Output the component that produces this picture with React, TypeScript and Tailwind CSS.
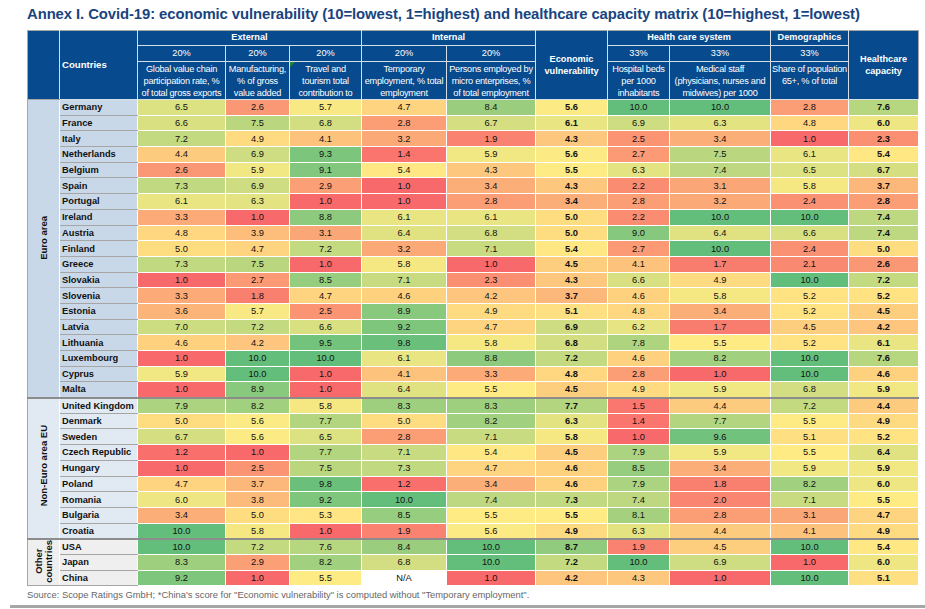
import React from "react";

type Row = [string, ...(number | null)[]];

const euro: Row[] = [
  ["Germany", 6.5, 2.6, 5.7, 4.7, 8.4, 5.6, 10.0, 10.0, 2.8, 7.6],
  ["France", 6.6, 7.5, 6.8, 2.8, 6.7, 6.1, 6.9, 6.3, 4.8, 6.0],
  ["Italy", 7.2, 4.9, 4.1, 3.2, 1.9, 4.3, 2.5, 3.4, 1.0, 2.3],
  ["Netherlands", 4.4, 6.9, 9.3, 1.4, 5.9, 5.6, 2.7, 7.5, 6.1, 5.4],
  ["Belgium", 2.6, 5.9, 9.1, 5.4, 4.3, 5.5, 6.3, 7.4, 6.5, 6.7],
  ["Spain", 7.3, 6.9, 2.9, 1.0, 3.4, 4.3, 2.2, 3.1, 5.8, 3.7],
  ["Portugal", 6.1, 6.3, 1.0, 1.0, 2.8, 3.4, 2.8, 3.2, 2.4, 2.8],
  ["Ireland", 3.3, 1.0, 8.8, 6.1, 6.1, 5.0, 2.2, 10.0, 10.0, 7.4],
  ["Austria", 4.8, 3.9, 3.1, 6.4, 6.8, 5.0, 9.0, 6.4, 6.6, 7.4],
  ["Finland", 5.0, 4.7, 7.2, 3.2, 7.1, 5.4, 2.7, 10.0, 2.4, 5.0],
  ["Greece", 7.3, 7.5, 1.0, 5.8, 1.0, 4.5, 4.1, 1.7, 2.1, 2.6],
  ["Slovakia", 1.0, 2.7, 8.5, 7.1, 2.3, 4.3, 6.6, 4.9, 10.0, 7.2],
  ["Slovenia", 3.3, 1.8, 4.7, 4.6, 4.2, 3.7, 4.6, 5.8, 5.2, 5.2],
  ["Estonia", 3.6, 5.7, 2.5, 8.9, 4.9, 5.1, 4.8, 3.4, 5.2, 4.5],
  ["Latvia", 7.0, 7.2, 6.6, 9.2, 4.7, 6.9, 6.2, 1.7, 4.5, 4.2],
  ["Lithuania", 4.6, 4.2, 9.5, 9.8, 5.8, 6.8, 7.8, 5.5, 5.2, 6.1],
  ["Luxembourg", 1.0, 10.0, 10.0, 6.1, 8.8, 7.2, 4.6, 8.2, 10.0, 7.6],
  ["Cyprus", 5.9, 10.0, 1.0, 4.1, 3.3, 4.8, 2.8, 1.0, 10.0, 4.6],
  ["Malta", 1.0, 8.9, 1.0, 6.4, 5.5, 4.5, 4.9, 5.9, 6.8, 5.9],
];

const nonEuro: Row[] = [
  ["United Kingdom", 7.9, 8.2, 5.8, 8.3, 8.3, 7.7, 1.5, 4.4, 7.2, 4.4],
  ["Denmark", 5.0, 5.6, 7.7, 5.0, 8.2, 6.3, 1.4, 7.7, 5.5, 4.9],
  ["Sweden", 6.7, 5.6, 6.5, 2.8, 7.1, 5.8, 1.0, 9.6, 5.1, 5.2],
  ["Czech Republic", 1.2, 1.0, 7.7, 7.1, 5.4, 4.5, 7.9, 5.9, 5.5, 6.4],
  ["Hungary", 1.0, 2.5, 7.5, 7.3, 4.7, 4.6, 8.5, 3.4, 5.9, 5.9],
  ["Poland", 4.7, 3.7, 9.8, 1.2, 3.4, 4.6, 7.9, 1.8, 8.2, 6.0],
  ["Romania", 6.0, 3.8, 9.2, 10.0, 7.4, 7.3, 7.4, 2.0, 7.1, 5.5],
  ["Bulgaria", 3.4, 5.0, 5.3, 8.5, 5.5, 5.5, 8.1, 2.8, 3.1, 4.7],
  ["Croatia", 10.0, 5.8, 1.0, 1.9, 5.6, 4.9, 6.3, 4.4, 4.1, 4.9],
];

const other: Row[] = [
  ["USA", 10.0, 7.2, 7.6, 8.4, 10.0, 8.7, 1.9, 4.5, 10.0, 5.4],
  ["Japan", 8.3, 2.9, 8.2, 6.8, 10.0, 7.2, 10.0, 6.9, 1.0, 6.0],
  ["China", 9.2, 1.0, 5.5, null, 1.0, 4.2, 4.3, 1.0, 10.0, 5.1],
];

const groups = [
  { label: ["Euro area"], bg: "bg-[#c8d8e9]", pad: "pb-[20px]", rows: euro },
  { label: ["Non-Euro area EU"], bg: "bg-[#e1e9f2]", pad: "pb-[6px]", rows: nonEuro },
  { label: ["Other", "countries"], bg: "bg-[#efefef]", pad: "pb-[2px]", rows: other },
];

const descs: string[][] = [
  ["Global value chain", "participation rate, %", "of total gross exports"],
  ["Manufacturing,", "% of gross", "value added"],
  ["Travel and", "tourism total", "contribution to"],
  ["Temporary", "employment, % total", "employment"],
  ["Persons employed by", "micro enterprises, %", "of total employment"],
  ["Hospital beds", "per 1000", "inhabitants"],
  ["Medical staff", "(physicians, nurses and", "midwives) per 1000"],
  ["Share of population", "65+, % of total"],
];

function scale(v: number): string {
  const red = [248, 105, 107];
  const yel = [255, 235, 132];
  const grn = [99, 190, 123];
  let a: number[];
  let b: number[];
  let t: number;
  if (v <= 5.5) {
    a = red;
    b = yel;
    t = (v - 1) / 4.5;
  } else {
    a = yel;
    b = grn;
    t = (v - 5.5) / 4.5;
  }
  t = Math.max(0, Math.min(1, t));
  const c = a.map((x, i) => Math.round(x + (b[i] - x) * t));
  return `rgb(${c[0]},${c[1]},${c[2]})`;
}

const hb = "border border-[#d6dee8]";
const desc = `${hb} font-normal align-top leading-[12px] pt-[1px] tracking-[-0.25px] whitespace-nowrap overflow-hidden`;

export default function App() {
  return (
    <div className="w-[925px] h-[609px] bg-white overflow-hidden font-['Liberation_Sans',Arial,sans-serif] text-[#111]">
      <div className="pl-[27px]">
        <div className="h-[30px] pt-[5px] text-[14.85px] leading-[19px] font-bold text-[#18447f] tracking-[-0.08px] whitespace-nowrap">
          Annex I. Covid-19: economic vulnerability (10=lowest, 1=highest) and healthcare capacity matrix (10=highest, 1=lowest)
        </div>
        <table className="table-fixed border-collapse w-[891px]">
          <colgroup>
            <col className="w-[32px]" />
            <col className="w-[78px]" />
            <col className="w-[88px]" />
            <col className="w-[64px]" />
            <col className="w-[72px]" />
            <col className="w-[85px]" />
            <col className="w-[89px]" />
            <col className="w-[72px]" />
            <col className="w-[62px]" />
            <col className="w-[101px]" />
            <col className="w-[78px]" />
            <col className="w-[70px]" />
          </colgroup>
          <thead className="bg-[#074a8d] text-white text-[9.2px]">
            <tr className="h-[15px]">
              <th rowSpan={3} className="border border-[#a6a6a6] border-r-[#d6dee8]" />
              <th rowSpan={3} className={`${hb} border-t-[#a6a6a6] text-left pl-[2px] font-bold text-[9.6px]`}>
                Countries
              </th>
              <th colSpan={3} className={`${hb} border-t-[#a6a6a6] font-bold`}>External</th>
              <th colSpan={2} className={`${hb} border-t-[#a6a6a6] font-bold`}>Internal</th>
              <th rowSpan={3} className={`${hb} border-t-[#a6a6a6] font-bold leading-[12px]`}>
                Economic
                <br />
                vulnerability
              </th>
              <th colSpan={2} className={`${hb} border-t-[#a6a6a6] font-bold`}>Health care system</th>
              <th className={`${hb} border-t-[#a6a6a6] font-bold`}>Demographics</th>
              <th rowSpan={3} className={`${hb} border-t-[#a6a6a6] border-r-[#a6a6a6] font-bold leading-[12px]`}>
                Healthcare
                <br />
                capacity
              </th>
            </tr>
            <tr className="h-[16px] font-normal">
              {["20%", "20%", "20%", "20%", "20%", "33%", "33%", "33%"].map((p, i) => (
                <th key={i} className={`${hb} font-normal`}>
                  {p}
                </th>
              ))}
            </tr>
            <tr className="h-[37px]">
              {descs.map((lines, i) => (
                <th key={i} className={`${desc} ${i === 2 ? "relative" : ""}`}>
                  {i === 2 && (
                    <span className="absolute left-0 top-0 w-0 h-0 border-t-[5px] border-t-[#1f8a3a] border-r-[5px] border-r-transparent" />
                  )}
                  {lines.map((l, li) => (
                    <div key={li}>{l}</div>
                  ))}
                </th>
              ))}
            </tr>
          </thead>
          <tbody className="text-[9.3px]">
            {groups.map((g, gi) =>
              g.rows.map((r, ri) => {
                const sep = gi > 0 && ri === 0;
                return (
                  <tr key={`${gi}-${ri}`} className="h-[15.7px]">
                    {ri === 0 && (
                      <td
                        rowSpan={g.rows.length}
                        className={`${g.bg} border border-white border-l-[#a6a6a6] ${sep ? "border-t-2 border-t-[#8c8c8c]" : ""} border-b-[#a6a6a6] align-middle p-0`}
                      >
                        <div className={`flex justify-center items-center ${g.pad}`}>
                          <div className="[writing-mode:vertical-rl] rotate-180 font-bold text-[9.5px] leading-[10px] text-center whitespace-nowrap text-[#111]">
                            {g.label.map((l, li) => (
                              <div key={li}>{l}</div>
                            ))}
                          </div>
                        </div>
                      </td>
                    )}
                    <td
                      className={`${g.bg} border border-white border-b-[#a6a6a6] ${sep ? "border-t-2 border-t-[#8c8c8c]" : ""} pl-[2px] font-bold whitespace-nowrap leading-[12px] p-0`}
                    >
                      {r[0]}
                    </td>
                    {r.slice(1).map((v, ci) => {
                      const bold = ci === 5 || ci === 9;
                      return (
                        <td
                          key={ci}
                          className={`border border-white ${sep ? "border-t-2 border-t-[#8c8c8c]" : ""} text-center leading-[12px] p-0 ${bold ? "font-bold" : ""}`}
                          style={{ backgroundColor: v === null ? "#ffffff" : scale(v as number) }}
                        >
                          {v === null ? "N/A" : (v as number).toFixed(1)}
                        </td>
                      );
                    })}
                  </tr>
                );
              })
            )}
          </tbody>
        </table>
        <div className="mt-[3px] text-[9.4px] leading-[12px] text-[#666] whitespace-nowrap">
          Source: Scope Ratings GmbH; *China&apos;s score for &quot;Economic vulnerability&quot; is computed without &quot;Temporary employment&quot;.
        </div>
      </div>
      <div className="ml-[10px] mt-[4px] h-[3px] bg-[#a6a6a6]" />
    </div>
  );
}
